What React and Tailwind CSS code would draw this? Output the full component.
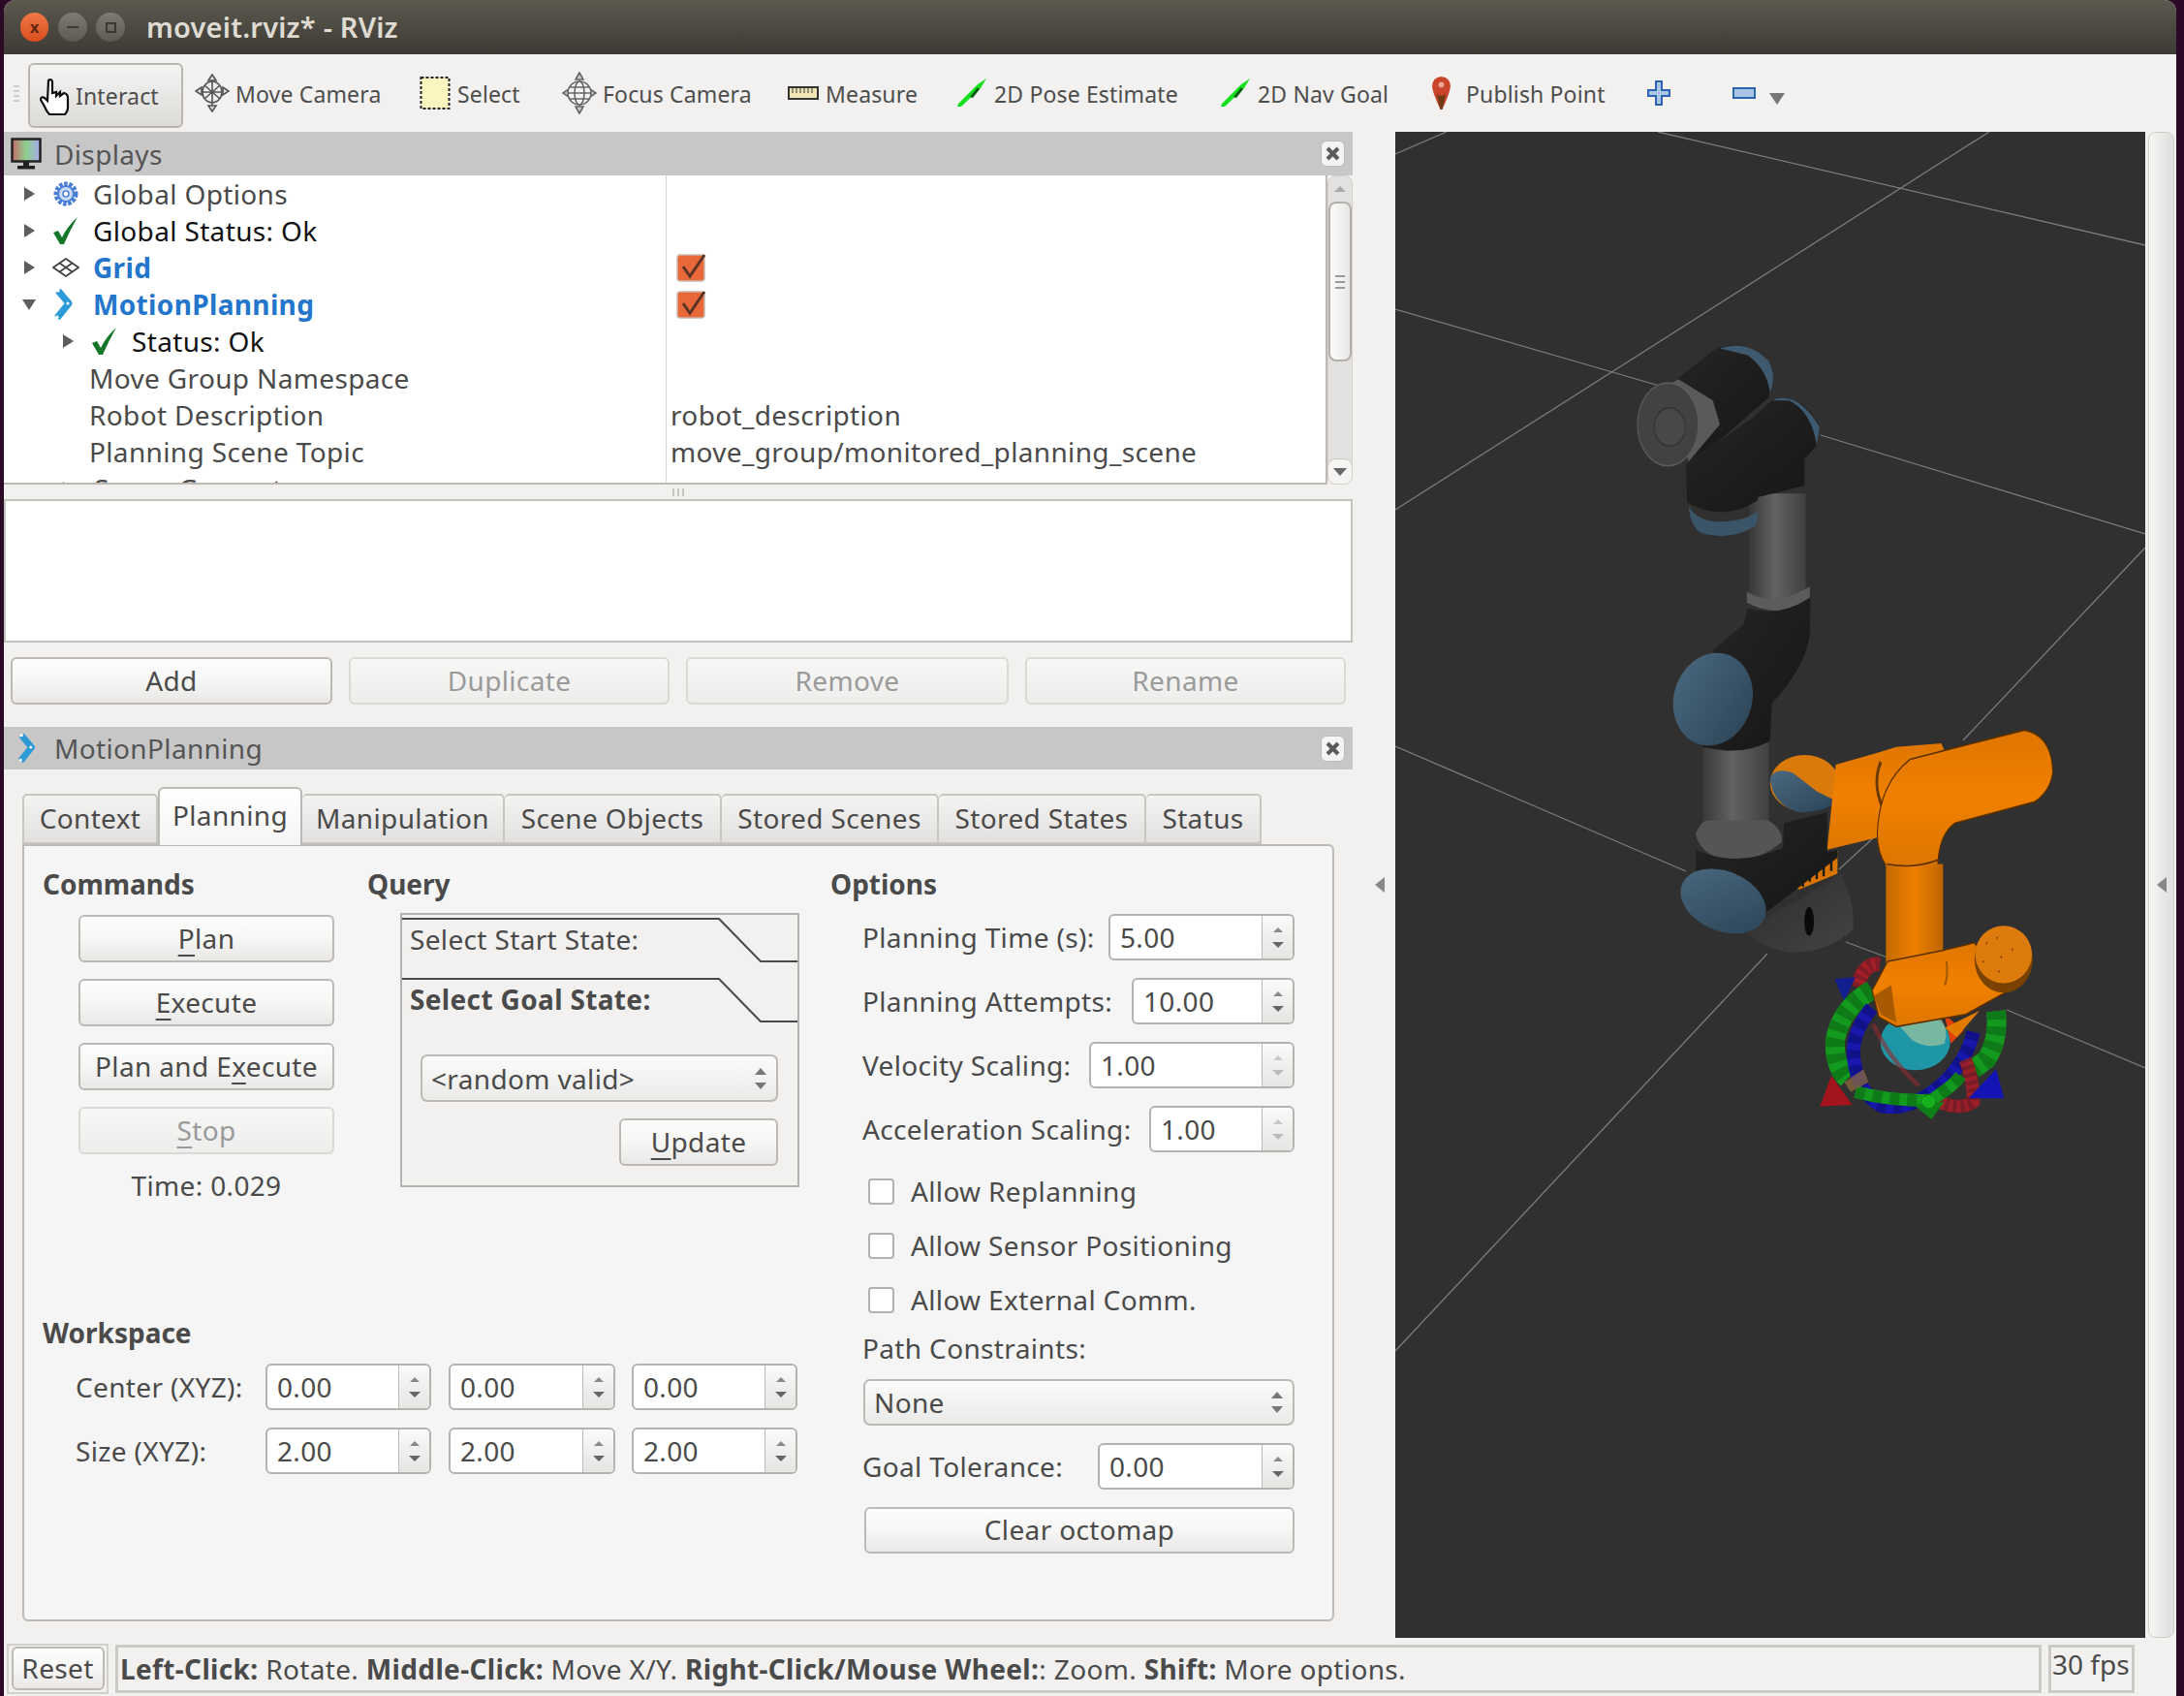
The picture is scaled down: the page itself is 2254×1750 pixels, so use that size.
import { Fragment } from 'react';

const font = 'font-["Noto_Sans",sans-serif]';
const txt = 'text-[28px] tracking-[0.35px]';
const tool = 'text-[23px] tracking-[0.15px]';
const head = 'text-[28px] font-bold';

const btnBase = 'flex items-center justify-center rounded-[6px] border-2 pb-[2px]';
const btnOn = 'border-[#bdbab5] bg-gradient-to-b from-[#fdfdfd] via-[#f6f6f5] to-[#e9e8e6] text-[#4a4a4a]';
const btnOff = 'border-[#dbd9d6] bg-gradient-to-b from-[#f7f7f6] to-[#eeedeb] text-[#9a9a9a]';

const Btn = ({ className = '', off, children }) => (
  <div className={`${btnBase} ${off ? btnOff : btnOn} ${txt} ${className}`}>{children}</div>
);

const Mn = ({ children }) => <span className="underline underline-offset-[6px] decoration-2">{children}</span>;

// ---------- toolbar icons ----------
const HandIcon = () => (
  <svg width="34" height="40" viewBox="0 0 34 40">
    <path d="M10 3 Q13 1 14 4 L14 16 L18 15 L18 19 L22 15 L22 19 L26 16 Q30 17 30 21 L30 31 Q30 35 27 38 L11 38 Q8 35 6 30 L2 23 Q2 19 6 21 L9 24 Z" fill="#fff" stroke="#111" strokeWidth="2.2" />
  </svg>
);
const MoveCamIcon = () => (
  <svg width="36" height="40" viewBox="0 0 36 40" fill="none" stroke="#555" strokeWidth="1.6">
    <path d="M18 1 L14 7 H22 Z M18 39 L14 33 H22 Z M1 18 L7 14 V22 Z M35 18 L29 14 V22 Z" fill="#ddd" />
    <ellipse cx="18" cy="19" rx="10" ry="11" fill="#eee" />
    <path d="M18 7 V33 M7 19 H29 M10 12 L26 26 M26 12 L10 26" />
  </svg>
);
const SelectIcon = () => (
  <svg width="32" height="36" viewBox="0 0 32 36">
    <rect x="1.5" y="2" width="29" height="32" fill="#fbf5c0" stroke="#222" strokeWidth="2" strokeDasharray="3 2" />
  </svg>
);
const FocusIcon = () => (
  <svg width="36" height="44" viewBox="0 0 36 44" fill="none" stroke="#666" strokeWidth="1.6">
    <path d="M18 1 L14 8 H22 Z M18 43 L14 36 H22 Z M1 22 L7 18 V26 Z M35 22 L29 18 V26 Z" fill="#ccc" />
    <circle cx="18" cy="22" r="12" fill="#f3f3f3" />
    <ellipse cx="18" cy="22" rx="5" ry="12" />
    <path d="M6 22 H30 M8 16 H28 M8 28 H28" />
  </svg>
);
const RulerIcon = () => (
  <svg width="32" height="14" viewBox="0 0 32 14">
    <rect x="1" y="1" width="30" height="12" fill="#f1e7b5" stroke="#333" strokeWidth="2" />
    <path d="M5 2 V7 M9 2 V7 M13 2 V7 M17 2 V7 M21 2 V7 M25 2 V7" stroke="#555" strokeWidth="1.2" />
  </svg>
);
const GreenArrow = () => (
  <svg width="32" height="30" viewBox="0 0 32 30">
    <path d="M31 0 L22 6 L2 26 L1 29 L5 29 L25 10 Z" fill="#14e01e" />
    <path d="M22 9 L14 19 L17 20 L24 11 Z" fill="#0a5a10" />
  </svg>
);
const PinIcon = () => (
  <svg width="20" height="36" viewBox="0 0 20 36">
    <path d="M10 0 Q20 1 20 11 Q19 19 11 36 H9 Q1 19 0 11 Q0 1 10 0 Z" fill="#c8452a" />
    <path d="M5 19 Q10 23 15 19 L11 36 H9 Z" fill="#6d3a16" />
    <circle cx="10" cy="9" r="3" fill="#f0a58f" />
  </svg>
);
const PlusIcon = () => (
  <svg width="24" height="26" viewBox="0 0 24 26">
    <path d="M9 1 H15 V10 H23 V16 H15 V25 H9 V16 H1 V10 H9 Z" fill="#a9c4e6" stroke="#2e64ae" strokeWidth="2" />
  </svg>
);
const MinusIcon = () => (
  <svg width="24" height="12" viewBox="0 0 24 12">
    <rect x="1" y="1" width="22" height="10" fill="#a9c4e6" stroke="#2e64ae" strokeWidth="2" />
  </svg>
);

const ToolItem = ({ w, gap, icon, label }) => (
  <div className={`flex items-center shrink-0 ${w}`}>
    <div className={`flex justify-center items-center shrink-0 ${gap}`}>{icon}</div>
    <span className={`${tool} mt-[2px] text-[#4d4d4d] whitespace-nowrap`}>{label}</span>
  </div>
);

// ---------- tree icons ----------
const Tri = ({ open }) => (
  <svg width="14" height="16" viewBox="0 0 14 16">
    {open ? <path d="M0 3 H14 L7 14 Z" fill="#5e5e5e" /> : <path d="M2 1 L13 8 L2 15 Z" fill="#5e5e5e" />}
  </svg>
);
const Gear = () => (
  <svg width="28" height="28" viewBox="0 0 28 28">
    <circle cx="14" cy="14" r="10" fill="none" stroke="#4b7fd6" strokeWidth="5" strokeDasharray="3.5 1.5" />
    <circle cx="14" cy="14" r="8" fill="#c9dbf6" stroke="#4b7fd6" strokeWidth="2" />
    <circle cx="14" cy="14" r="3" fill="#fff" stroke="#4b7fd6" strokeWidth="1.5" />
  </svg>
);
const Check = () => (
  <svg width="28" height="28" viewBox="0 0 28 28">
    <path d="M1 16 L6 14 L10 21 Q15 10 26 0 Q18 14 12 28 H8 Z" fill="#16772a" />
  </svg>
);
const GridIcon = () => (
  <svg width="28" height="20" viewBox="0 0 28 20" fill="none" stroke="#444" strokeWidth="1.8">
    <path d="M14 1 L27 10 L14 19 L1 10 Z M7.5 5.5 L20.5 14.5 M20.5 5.5 L7.5 14.5" />
  </svg>
);
const MotionIcon = ({ h = 34 }) => (
  <svg width="22" height={h} viewBox="0 0 22 34">
    <path d="M6 3 L17 16 L5 31" fill="none" stroke="#2d9ad8" strokeWidth="7" strokeLinejoin="round" />
    <circle cx="6" cy="3" r="1.6" fill="#fff" />
    <circle cx="16" cy="16" r="1.6" fill="#fff" />
    <circle cx="5" cy="30" r="1.6" fill="#fff" />
  </svg>
);
const OrangeCheck = () => (
  <svg width="32" height="30" viewBox="0 0 32 30" className="ml-[6px]">
    <rect x="1" y="2" width="28" height="27" rx="3" fill="#e9683a" stroke="#c9b6ab" strokeWidth="1.5" />
    <path d="M7 14 L14 24 L29 2" fill="none" stroke="#5c3426" strokeWidth="3" />
  </svg>
);
const Monitor = () => (
  <svg width="32" height="34" viewBox="0 0 32 34">
    <defs>
      <linearGradient id="scr" x1="0" x2="1" y1="0" y2="0">
        <stop offset="0" stopColor="#c46a6a" />
        <stop offset=".5" stopColor="#8ed08e" />
        <stop offset="1" stopColor="#a8a8ec" />
      </linearGradient>
    </defs>
    <rect x="1.5" y="1.5" width="29" height="23" fill="url(#scr)" stroke="#222" strokeWidth="2.5" />
    <rect x="13" y="25" width="6" height="4" fill="#222" />
    <rect x="7" y="29" width="18" height="3.5" fill="#222" />
  </svg>
);
const CloseBtn = () => (
  <div className="w-[25px] h-[27px] flex items-center justify-center rounded-[6px] bg-[#f4f4f3] border border-[#bdbbb7]">
    <svg width="15" height="15" viewBox="0 0 15 15">
      <path d="M2 2 L13 13 M13 2 L2 13" stroke="#5a5a5a" strokeWidth="4" />
    </svg>
  </div>
);

const PanelHead = ({ h, icon, label }) => (
  <div className={`${h} bg-[#c7c7c7] flex items-center shrink-0`}>
    <div className="w-[52px] flex justify-center pr-[6px]">{icon}</div>
    <span className={`flex-1 ${txt} text-[#555]`}>{label}</span>
    <div className="pr-[8px]"><CloseBtn /></div>
  </div>
);

const TreeRow = ({ arrow, open, indent, icon, label, labelClass = 'text-[#4a4a4a]', value }) => (
  <div className="grid grid-cols-[683px_1fr] grid-rows-[38px] h-[38px] shrink-0">
    <div className="flex items-center min-w-0">
      {indent ? <div className="w-[40px] shrink-0" /> : null}
      <div className="w-[50px] flex justify-center pl-[2px] shrink-0">{arrow && <Tri open={open} />}</div>
      {icon ? <div className="w-[42px] shrink-0 flex">{icon}</div> : null}
      <span className={`${txt} leading-[34px] whitespace-nowrap ${labelClass} ${icon ? '' : indent ? 'ml-[3px]' : 'ml-[38px]'}`}>{label}</span>
    </div>
    <div className={`flex items-center pl-[4px] border-l border-[#d8d8d8] ${txt} leading-[34px] text-[#4a4a4a] whitespace-nowrap`}>{value}</div>
  </div>
);

const TreeScroll = () => (
  <div className="w-[26px] flex flex-col items-center rounded-[8px] border border-[#d3d1cd] bg-[#e2e1df] shrink-0">
    <div className="h-[26px] flex items-center justify-center w-full">
      <svg width="12" height="6" viewBox="0 0 12 6"><path d="M0 6 L6 0 L12 6 Z" fill="#aaa" /></svg>
    </div>
    <div className="h-[165px] w-full rounded-[8px] border-2 border-[#b3b0ab] bg-gradient-to-r from-[#fbfbfb] to-[#e8e7e5] flex flex-col gap-[4px] items-center justify-center">
      <div className="w-[10px] h-[2px] bg-[#999]" />
      <div className="w-[10px] h-[2px] bg-[#999]" />
      <div className="w-[10px] h-[2px] bg-[#999]" />
    </div>
    <div className="flex-1" />
    <div className="h-[26px] flex items-center justify-center w-full rounded-[8px] bg-[#f5f4f3] border-t border-[#c8c6c2]">
      <svg width="14" height="8" viewBox="0 0 14 8"><path d="M0 0 H14 L7 8 Z" fill="#666" /></svg>
    </div>
  </div>
);

const tabs = [
  ['Context', 'w-[140px]'],
  ['Planning', 'w-[149px]'],
  ['Manipulation', 'w-[209px]'],
  ['Scene Objects', 'w-[224px]'],
  ['Stored Scenes', 'w-[224px]'],
  ['Stored States', 'w-[214px]'],
  ['Status', 'w-[119px]'],
];

const SpinArrows = ({ off }) => (
  <div className="w-[32px] h-full flex flex-col items-center justify-center gap-[10px] border-l border-[#bbb] bg-gradient-to-b from-[#fafafa] to-[#e6e5e3] rounded-r-[5px] shrink-0">
    <svg width="10" height="5" viewBox="0 0 10 5"><path d="M0 5 L5 0 L10 5 Z" fill={off ? '#c9c9c9' : '#8a8a8a'} /></svg>
    <svg width="12" height="6" viewBox="0 0 12 6"><path d="M0 0 H12 L6 6 Z" fill={off ? '#bcbcbc' : '#666'} /></svg>
  </div>
);

const Spin = ({ w, value, off }) => (
  <div className={`${w} h-[48px] flex items-center rounded-[6px] border-2 border-[#b5b3ae] bg-white shrink-0`}>
    <span className={`flex-1 pl-[10px] ${txt} text-[#4a4a4a]`}>{value}</span>
    <SpinArrows off={off} />
  </div>
);

const ComboArrows = () => (
  <div className="w-[32px] flex flex-col items-center gap-[8px] shrink-0">
    <svg width="12" height="7" viewBox="0 0 12 7"><path d="M0 7 L6 0 L12 7 Z" fill="#777" /></svg>
    <svg width="12" height="7" viewBox="0 0 12 7"><path d="M0 0 H12 L6 7 Z" fill="#777" /></svg>
  </div>
);

const OptRow = ({ label, w, value, off }) => (
  <div className="flex items-center justify-between h-[48px] ml-[33px] w-[446px]">
    <span className={`${txt} text-[#4a4a4a] whitespace-nowrap`}>{label}</span>
    <Spin w={w} value={value} off={off} />
  </div>
);

const CheckRow = ({ label }) => (
  <div className="flex items-center h-[56px] ml-[39px] gap-[17px]">
    <div className="w-[27px] h-[27px] rounded-[4px] border-2 border-[#b3b1ad] bg-white" />
    <span className={`${txt} text-[#4a4a4a] whitespace-nowrap`}>{label}</span>
  </div>
);

const ToolboxTab = ({ label, bold }) => (
  <div className="relative h-[62px] shrink-0">
    <svg className="absolute left-0 top-0" width="408" height="62" viewBox="0 0 408 62">
      <path d="M0 3 H327 L370 47 H408" fill="none" stroke="#4a4a4a" strokeWidth="2" />
    </svg>
    <div className={`pl-[8px] pt-[3px] ${txt} text-[#4a4a4a] whitespace-nowrap ${bold ? 'font-bold' : ''}`}>{label}</div>
  </div>
);

// ---------- 3D view ----------
const Striped = ({ d, base, dark, width, dash = '26 22', opacity = 1 }) => (
  <g fill="none" strokeWidth={width} opacity={opacity}>
    <path d={d} stroke={base} />
    <path d={d} stroke={dark} strokeDasharray={dash} />
  </g>
);

const RobotView = () => (
  <svg width="774" height="1554" viewBox="1440 136 774 1554" className="block">
    <defs>
      <linearGradient id="tube" x1="0" x2="1" y1="0" y2="0">
        <stop offset="0" stopColor="#383838" />
        <stop offset=".45" stopColor="#626262" />
        <stop offset="1" stopColor="#404040" />
      </linearGradient>
      <linearGradient id="blk" x1="0" x2="1" y1="0" y2="1">
        <stop offset="0" stopColor="#252525" />
        <stop offset="1" stopColor="#161616" />
      </linearGradient>
      <linearGradient id="blu" x1="0" x2="1" y1="0" y2="1">
        <stop offset="0" stopColor="#4a6980" />
        <stop offset="1" stopColor="#2b4254" />
      </linearGradient>
      <linearGradient id="org" x1="0" x2="0" y1="0" y2="1">
        <stop offset="0" stopColor="#e07600" />
        <stop offset=".5" stopColor="#f08000" />
        <stop offset="1" stopColor="#dd7600" />
      </linearGradient>
      <linearGradient id="orgV" x1="0" x2="1" y1="0" y2="0">
        <stop offset="0" stopColor="#c46a00" />
        <stop offset=".5" stopColor="#ee7f00" />
        <stop offset="1" stopColor="#bd6500" />
      </linearGradient>
      <linearGradient id="dome" x1="0" x2="1" y1="0" y2="1">
        <stop offset="0" stopColor="#2c2c2c" />
        <stop offset="1" stopColor="#444" />
      </linearGradient>
    </defs>
    <rect x="1440" y="136" width="774" height="1554" fill="#303030" />
    <g stroke="#7c7c7c" strokeWidth="1.3" fill="none">
      <path d="M1440 159 L1493 136" />
      <path d="M1711 136 L2214 253" />
      <path d="M1440 319 L1716 399 M1879 449 L2214 551" />
      <path d="M1440 526 L2053 136" />
      <path d="M1440 770 L1740 899 M1905 972 L1948 988 M2071 1042 L2214 1102" />
      <path d="M2214 565 L2026 764 M1934 864 L1898 897 M1824 984 L1440 1394" />
    </g>

    {/* gizmo, sits under the orange wrist */}
    <g transform="translate(1860 940) scale(.3333)">
      <ellipse cx="350" cy="405" rx="108" ry="88" fill="#1f96a6" />
      <path d="M300 355 Q370 330 430 335 Q455 370 440 410 Q390 430 340 400 Z" fill="#8fbf9f" opacity=".8" />
      <Striped d="M240 165 Q190 160 170 235" base="#a31e28" dark="#7f1c26" width={44} dash="12 12" />
      <path d="M100 210 L165 205 L130 280 Z" fill="#141f8f" />
      <Striped d="M215 245 Q120 300 102 400 Q98 480 140 520" base="#14991f" dark="#0f7a18" width={60} />
      <Striped d="M600 310 Q610 400 570 460 L530 490" base="#14991f" dark="#0f7a18" width={60} />
      <Striped d="M215 300 Q150 380 160 460 Q175 570 250 605 Q340 620 440 530 Q510 460 530 375" base="#1616b4" dark="#101090" width={42} opacity={0.94} />
      <path d="M220 350 Q270 460 360 540" fill="none" stroke="#8f2a30" strokeWidth="14" opacity=".6" />
      <Striped d="M420 590 Q490 620 530 590 Q530 520 505 460" base="#a31e28" dark="#7f1c26" width={40} dash="12 12" opacity={0.92} />
      <Striped d="M165 560 Q280 590 400 585 Q470 540 490 510" base="#14991f" dark="#0f7a18" width={38} dash="30 24" />
      <path d="M345 600 L440 590 L400 645 Z" fill="#0f7f18" />
      <circle cx="392" cy="590" r="20" fill="#1bc41f" opacity=".7" />
      <path d="M55 605 L90 510 L155 600 Z" fill="#a3141c" />
      <path d="M130 530 L190 490 L205 530 L150 560 Z" fill="#8a6a3c" opacity=".75" />
      <path d="M515 580 L625 580 L600 490 Z" fill="#1414b4" />
      <path d="M440 320 L500 370 L460 410 Z" fill="#e5400c" />
    </g>

    {/* crop of the robot, stretched back to page proportions */}
    <g transform="translate(1600 320) scale(.3571 .5485)">
      <path d="M570 1175 Q640 1130 720 1110 L840 1060 Q880 1110 875 1165 Q800 1210 690 1208 Q620 1200 570 1175 Z" fill="url(#dome)" />
      <ellipse cx="748" cy="1150" rx="14" ry="27" fill="#0a0a0a" />
      <path d="M700 1085 L830 1015 V1060 L720 1090 Z" fill="#d97400" />
      <path d="M730 1085 V1060 M750 1075 V1045 M770 1070 V1040 M790 1065 V1030 M812 1055 V1020" stroke="#1c1c1c" strokeWidth="7" />

      {/* shoulder capsule, half orange half blue where the meshes clash */}
      <ellipse cx="735" cy="890" rx="100" ry="53" fill="#d97a0a" />
      <path d="M635 880 Q640 930 720 945 Q790 945 830 925 L770 905 L700 870 Q650 860 635 880 Z" fill="url(#blu)" />

      {/* second arm, behind the elbow */}
      <path d="M800 1015 L825 855 L950 832 L1000 822 L1130 815 L1140 830 L960 990 Z" fill="url(#org)" />
      <path d="M955 850 Q930 890 960 935" stroke="#6a3a00" strokeWidth="8" fill="none" />

      <rect x="440" y="815" width="192" height="190" fill="url(#tube)" />
      <path d="M420 985 Q440 955 460 960 L630 960 Q670 975 670 1000 Q600 1040 500 1035 Q430 1020 420 985 Z" fill="#555" />
      <path d="M420 1015 Q540 1050 672 1012 L675 965 L800 945 V1020 L830 1015 V1030 L620 1135 L560 1110 L420 1060 Z" fill="url(#blk)" />
      <ellipse cx="500" cy="1112" rx="125" ry="58" fill="url(#blu)" transform="rotate(10 500 1112)" />

      <rect x="575" y="345" width="163" height="200" fill="url(#tube)" />
      <path d="M568 530 Q650 560 750 520 V552 Q650 580 568 550 Z" fill="#5c5c5c" />
      <path d="M570 560 Q660 580 752 540 L750 610 Q740 670 640 740 L635 810 Q560 840 440 822 V800 L520 770 L470 640 L560 590 Z" fill="url(#blk)" />
      <ellipse cx="470" cy="732" rx="116" ry="86" fill="url(#blu)" transform="rotate(-10 470 732)" />

      {/* wrist */}
      <path d="M400 370 Q430 400 500 398 Q570 395 600 378 L595 405 Q520 435 440 420 Q405 410 400 370 Z" fill="#3a5468" />
      <path d="M640 170 Q720 150 775 215 L770 255 L735 280 V330 L600 352 V358 Q500 400 395 362 L392 290 L590 200 Z" fill="url(#blk)" />
      <path d="M640 170 Q715 150 778 220 L770 255 Q755 190 690 170 Z" fill="#3f5a6e" />
      <path d="M345 140 L480 72 Q560 55 620 92 Q650 120 630 165 L480 250 L400 285 Z" fill="url(#blk)" />
      <path d="M490 72 Q570 55 630 95 Q655 125 635 155 Q625 110 570 85 Z" fill="#3f5a6e" />
      <path d="M330 145 L370 130 L470 170 L490 215 L400 285 Z" fill="#5a5a5a" />
      <ellipse cx="340" cy="215" rx="88" ry="78" fill="#424242" stroke="#5c5c5c" strokeWidth="3" />
      <ellipse cx="345" cy="220" rx="45" ry="36" fill="#484848" stroke="#333" strokeWidth="3" />

      {/* orange elbow and forearm */}
      <path d="M945 985 Q950 890 1040 845 L1370 790 Q1450 800 1452 870 Q1445 905 1400 925 L1170 965 Q1125 985 1120 1040 L1120 1045 L970 1045 Q945 1020 945 985 Z" fill="url(#org)" stroke="#5a3000" strokeWidth="3" />
      <rect x="970" y="1042" width="165" height="190" fill="url(#orgV)" />
      <path d="M972 1042 Q1050 1052 1122 1034" stroke="#5a3000" strokeWidth="3" fill="none" />
      <path d="M1140 1350 L1240 1318 L1175 1368 Z" fill="#e07a00" />
      <path d="M930 1280 L975 1225 L1130 1205 L1225 1190 L1340 1275 L1200 1325 L1000 1348 L950 1330 Z" fill="url(#org)" stroke="#5a3000" strokeWidth="3" />
      <path d="M935 1290 L985 1270 L1000 1340 L955 1325 Z" fill="#a85a00" />
      <path d="M1145 1225 Q1150 1255 1140 1270" stroke="#a85a00" strokeWidth="6" fill="none" />
      <ellipse cx="1310" cy="1222" rx="84" ry="62" fill="#7a4200" />
      <ellipse cx="1310" cy="1212" rx="82" ry="54" fill="#dd7b0c" />
      <path d="M1260 1190 L1340 1240 M1290 1180 L1350 1210 M1250 1225 L1310 1250" stroke="#5a3000" strokeWidth="4" strokeDasharray="3 46" fill="none" />
    </g>
  </svg>
);

const SideArrow = () => (
  <svg width="10" height="16" viewBox="0 0 10 16"><path d="M10 0 V16 L0 8 Z" fill="#888" /></svg>
);

export default function App() {
  return (
    <div className={`w-[2254px] h-[1750px] bg-[#2a0a24] flex ${font} overflow-hidden`}>
      <div className="w-[4px] shrink-0" />
      <div className="w-[2242px] h-full flex flex-col bg-[#f2f1f0] rounded-t-[12px] overflow-hidden">
        {/* title bar */}
        <div className="h-[56px] shrink-0 flex items-center bg-gradient-to-b from-[#5b584e] to-[#3d3b35] pl-[17px]">
          <div className="w-[29px] h-[30px] rounded-full bg-gradient-to-b from-[#f07746] to-[#d94e1c] flex items-center justify-center text-[16px] leading-none text-[#5e2410] font-bold">x</div>
          <div className="w-[30px] h-[30px] ml-[10px] rounded-full bg-gradient-to-b from-[#7d7b72] to-[#5c5a52] flex items-center justify-center">
            <div className="w-[12px] h-[2px] bg-[#3a3a34]" />
          </div>
          <div className="w-[30px] h-[30px] ml-[9px] rounded-full bg-gradient-to-b from-[#7d7b72] to-[#5c5a52] flex items-center justify-center">
            <div className="w-[11px] h-[11px] border-2 border-[#3a3a34]" />
          </div>
          <span className="ml-[22px] text-[29px] tracking-[0.2px] font-semibold text-[#dfdbd2] whitespace-nowrap">moveit.rviz* - RViz</span>
        </div>

        {/* toolbar */}
        <div className="h-[80px] shrink-0 flex items-center">
          <div className="w-[25px] shrink-0 flex flex-col gap-[3px] pl-[10px]">
            <div className="w-[6px] h-[2px] bg-[#ccc]" />
            <div className="w-[6px] h-[2px] bg-[#ccc]" />
            <div className="w-[6px] h-[2px] bg-[#ccc]" />
            <div className="w-[6px] h-[2px] bg-[#ccc]" />
          </div>
          <div className="w-[160px] h-[67px] mt-[4px] shrink-0 rounded-[6px] border-2 border-[#b9b6b0] bg-gradient-to-b from-[#f4f4f3] to-[#dcdbd8] flex items-center pl-[9px] gap-[4px]">
            <div className="mt-[4px]"><HandIcon /></div>
            <span className={`${tool} text-[#4d4d4d] mt-[2px]`}>Interact</span>
          </div>
          <div className="w-[12px] shrink-0" />
          <ToolItem w="w-[231px]" gap="w-[42px] pr-[6px]" icon={<MoveCamIcon />} label="Move Camera" />
          <ToolItem w="w-[148px]" gap="w-[40px] pr-[6px]" icon={<SelectIcon />} label="Select" />
          <ToolItem w="w-[232px]" gap="w-[42px] pr-[6px]" icon={<FocusIcon />} label="Focus Camera" />
          <ToolItem w="w-[174px]" gap="w-[40px] pr-[6px]" icon={<RulerIcon />} label="Measure" />
          <ToolItem w="w-[272px]" gap="w-[40px] pr-[6px]" icon={<GreenArrow />} label="2D Pose Estimate" />
          <ToolItem w="w-[220px]" gap="w-[40px] pr-[6px]" icon={<GreenArrow />} label="2D Nav Goal" />
          <ToolItem w="w-[222px]" gap="w-[35px] pr-[16px]" icon={<PinIcon />} label="Publish Point" />
          <div className="w-[88px] shrink-0"><PlusIcon /></div>
          <div className="w-[38px] shrink-0"><MinusIcon /></div>
          <svg width="16" height="12" viewBox="0 0 16 12" className="mt-[12px]"><path d="M0 0 H16 L8 12 Z" fill="#777" /></svg>
        </div>

        {/* central area */}
        <div className="h-[1554px] shrink-0 flex">
          <div className="w-[1392px] shrink-0 flex flex-col">
            <PanelHead h="h-[45px]" icon={<Monitor />} label="Displays" />
            <div className="h-[319px] shrink-0 flex">
              <div className="flex-1 min-w-0 bg-white border-b-2 border-r-2 border-[#bdbab5] flex flex-col overflow-hidden">
                <TreeRow arrow icon={<Gear />} label="Global Options" />
                <TreeRow arrow icon={<Check />} label="Global Status: Ok" labelClass="text-[#111]" />
                <TreeRow arrow icon={<GridIcon />} label="Grid" labelClass="text-[#2476cc] font-bold" value={<OrangeCheck />} />
                <TreeRow arrow open icon={<MotionIcon />} label="MotionPlanning" labelClass="text-[#2476cc] font-bold" value={<OrangeCheck />} />
                <TreeRow arrow indent icon={<Check />} label="Status: Ok" labelClass="text-[#111]" />
                <TreeRow label="Move Group Namespace" />
                <TreeRow label="Robot Description" value="robot_description" />
                <TreeRow label="Planning Scene Topic" value="move_group/monitored_planning_scene" />
                <TreeRow arrow indent label="Scene Geometry" />
              </div>
              <TreeScroll />
            </div>
            <div className="h-[15px] shrink-0 flex items-center justify-center gap-[3px]">
              <div className="w-[2px] h-[8px] bg-[#c9c7c3]" />
              <div className="w-[2px] h-[8px] bg-[#c9c7c3]" />
              <div className="w-[2px] h-[8px] bg-[#c9c7c3]" />
            </div>
            <div className="h-[148px] shrink-0 bg-white border-2 border-[#c4c2bd]" />
            <div className="flex gap-[17px] pl-[7px] mt-[15px] h-[49px] shrink-0">
              <Btn className="w-[332px]">Add</Btn>
              <Btn off className="w-[331px]">Duplicate</Btn>
              <Btn off className="w-[333px]">Remove</Btn>
              <Btn off className="w-[331px]">Rename</Btn>
            </div>
            <div className="h-[23px] shrink-0" />
            <PanelHead h="h-[44px]" icon={<MotionIcon h={32} />} label="MotionPlanning" />

            {/* tabs */}
            <div className="ml-[19px] mt-[18px] h-[59px] shrink-0 flex items-end">
              {tabs.map(([name, w]) => name === 'Planning' ? (
                <div key={name} className={`${w} h-[60px] -mb-[1px] relative z-10 bg-gradient-to-b from-white to-[#f5f5f5] border-2 border-b-0 border-[#bdbab5] rounded-t-[6px] flex items-center justify-center ${txt} text-[#4a4a4a] pb-[4px]`}>{name}</div>
              ) : (
                <div key={name} className={`${w} h-[52px] pb-[2px] bg-gradient-to-b from-[#f3f3f2] to-[#e2e1df] border-2 border-l-0 first:border-l-2 border-[#c8c6c2] rounded-t-[5px] flex items-center justify-center ${txt} text-[#4a4a4a]`}>{name}</div>
              ))}
            </div>

            {/* planning pane */}
            <div className="ml-[19px] w-[1354px] h-[802px] shrink-0 bg-[#f5f5f5] border-2 border-[#bdbab5] rounded-b-[6px] rounded-tr-[6px] flex pt-[25px] pl-[19px]">
              <div className="w-[813px] shrink-0 flex flex-col">
                <div className="flex h-[343px] shrink-0">
                  <div className="w-[335px] shrink-0 flex flex-col">
                    <div className={`h-[34px] pb-[6px] flex items-center ${head} text-[#4a4a4a]`}>Commands</div>
                    <div className="ml-[37px] mt-[12px] w-[264px] flex flex-col gap-[17px]">
                      <Btn className="h-[49px]"><span><Mn>P</Mn>lan</span></Btn>
                      <Btn className="h-[49px]"><span><Mn>E</Mn>xecute</span></Btn>
                      <Btn className="h-[49px]"><span>Plan and E<Mn>x</Mn>ecute</span></Btn>
                      <Btn off className="h-[49px]"><span><Mn>S</Mn>top</span></Btn>
                    </div>
                    <div className={`ml-[37px] w-[264px] mt-[14px] h-[36px] flex items-center justify-center ${txt} text-[#4a4a4a]`}>Time: 0.029</div>
                  </div>
                  <div className="flex flex-col">
                    <div className={`h-[34px] pb-[6px] flex items-center ${head} text-[#4a4a4a]`}>Query</div>
                    <div className="ml-[34px] mt-[10px] w-[412px] h-[283px] bg-[#f2f1f0] border-2 border-[#b5b3ae] flex flex-col">
                      <div className="mt-[1px]"><ToolboxTab label="Select Start State:" /></div>
                      <ToolboxTab label="Select Goal State:" bold />
                      <div className={`ml-[19px] mt-[19px] w-[369px] h-[49px] rounded-[7px] border-2 border-[#bdbab5] bg-gradient-to-b from-[#fbfbfb] to-[#eaeae8] flex items-center ${txt} text-[#4a4a4a]`}>
                        <span className="flex-1 pl-[9px]">&lt;random valid&gt;</span>
                        <ComboArrows />
                      </div>
                      <Btn className="ml-[224px] mt-[17px] w-[164px] h-[49px]"><span><Mn>U</Mn>pdate</span></Btn>
                    </div>
                  </div>
                </div>
                <div className={`mt-[117px] h-[34px] shrink-0 flex items-center ${head} text-[#4a4a4a]`}>Workspace</div>
                <div className="mt-[15px] flex flex-col gap-[18px]">
                  {[['Center (XYZ):', '0.00'], ['Size (XYZ):', '2.00']].map(([label, val]) => (
                    <div key={label} className="flex items-center pl-[34px]">
                      <span className={`w-[196px] ${txt} text-[#4a4a4a] whitespace-nowrap`}>{label}</span>
                      <Spin w="w-[171px]" value={val} />
                      <div className="w-[18px]" />
                      <Spin w="w-[172px]" value={val} />
                      <div className="w-[17px]" />
                      <Spin w="w-[171px]" value={val} />
                    </div>
                  ))}
                </div>
              </div>

              <div className="flex flex-col">
                <div className={`h-[34px] pb-[6px] flex items-center ${head} text-[#4a4a4a]`}>Options</div>
                <div className="mt-[11px] flex flex-col gap-[18px]">
                  <OptRow label="Planning Time (s):" w="w-[192px]" value="5.00" />
                  <OptRow label="Planning Attempts:" w="w-[168px]" value="10.00" />
                  <OptRow label="Velocity Scaling:" w="w-[212px]" value="1.00" off />
                  <OptRow label="Acceleration Scaling:" w="w-[150px]" value="1.00" off />
                </div>
                <div className="mt-[12px]">
                  <CheckRow label="Allow Replanning" />
                  <CheckRow label="Allow Sensor Positioning" />
                  <CheckRow label="Allow External Comm." />
                </div>
                <div className={`ml-[33px] mt-[4px] h-[36px] flex items-center ${txt} text-[#4a4a4a]`}>Path Constraints:</div>
                <div className={`ml-[34px] mt-[14px] w-[445px] h-[48px] rounded-[7px] border-2 border-[#bdbab5] bg-gradient-to-b from-[#fbfbfb] to-[#eaeae8] flex items-center ${txt} text-[#4a4a4a]`}>
                  <span className="flex-1 pl-[9px]">None</span>
                  <ComboArrows />
                </div>
                <div className="mt-[18px]"><OptRow label="Goal Tolerance:" w="w-[203px]" value="0.00" /></div>
                <Btn className="ml-[35px] mt-[18px] w-[444px] h-[48px]">Clear octomap</Btn>
              </div>
            </div>
          </div>

          <div className="w-[44px] shrink-0 flex items-center justify-center pl-[12px]"><SideArrow /></div>
          <div className="w-[774px] shrink-0"><RobotView /></div>
          <div className="w-[27px] ml-[3px] shrink-0 rounded-[8px] border border-[#cfcdc9] bg-gradient-to-r from-[#f7f7f6] to-[#dfdedc] flex items-center justify-center"><SideArrow /></div>
        </div>

        {/* status bar */}
        <div className="flex-1 flex items-center pl-[3px] pt-[3px]">
          <div className="h-[52px] w-[105px] shrink-0 border-2 border-[#d2d0cc] flex items-center justify-center">
            <Btn className="w-[96px] h-[45px]">Reset</Btn>
          </div>
          <div className={`ml-[7px] w-[1988px] h-[50px] shrink-0 border-[3px] border-[#cbcac6] flex items-center pl-[2px] ${txt} text-[#4a4a4a] whitespace-nowrap`}>
            {[
              ['Left-Click:', ' Rotate. '],
              ['Middle-Click:', ' Move X/Y. '],
              ['Right-Click/Mouse Wheel:', ': Zoom. '],
              ['Shift:', ' More options.'],
            ].map(([b, t]) => (
              <Fragment key={b}>
                <b>{b}</b><span className="whitespace-pre">{t}</span>
              </Fragment>
            ))}
          </div>
          <div className={`ml-[7px] w-[89px] h-[50px] shrink-0 border-[3px] border-[#cbcac6] pl-[1px] ${txt} tracking-normal leading-[34px] text-[#4a4a4a] whitespace-nowrap`}>30 fps</div>
        </div>
      </div>
    </div>
  );
}
